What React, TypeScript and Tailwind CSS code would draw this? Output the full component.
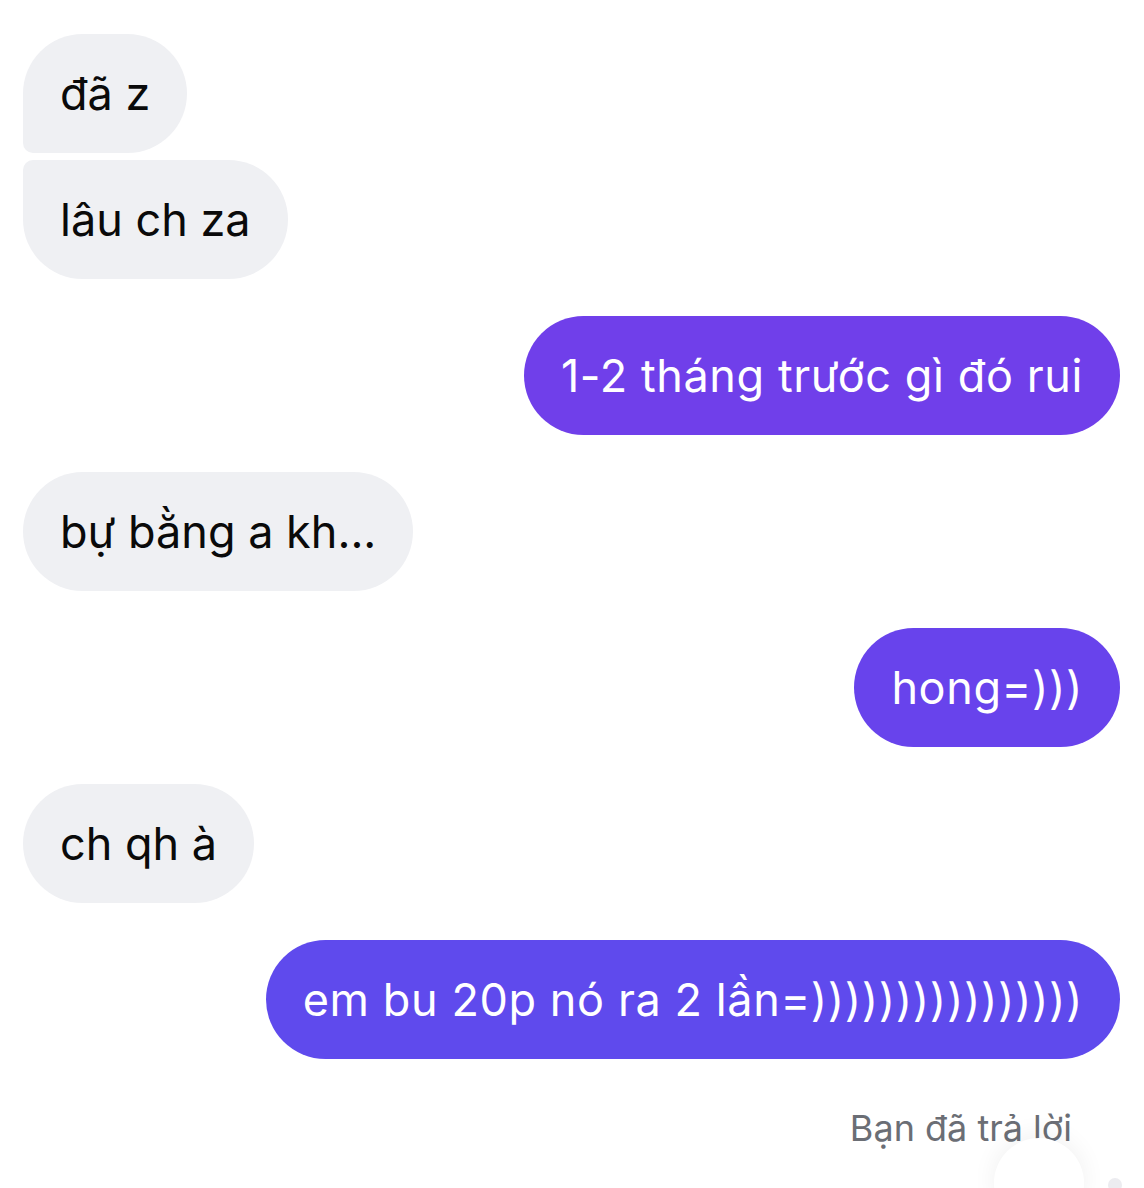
import React from "react";

type Msg = {
  text: string;
  mine?: boolean;
  shape?: string;
  color?: string;
  gapTop: string;
};

const messages: Msg[] = [
  { text: "đã z", shape: "rounded-[60px] rounded-bl-[10px]", gapTop: "mt-0" },
  { text: "lâu ch za", shape: "rounded-[60px] rounded-tl-[10px]", gapTop: "mt-[7px]" },
  { text: "1-2 tháng trước gì đó rui", mine: true, color: "bg-[#703fea]", gapTop: "mt-[37px]" },
  { text: "bự bằng a kh...", gapTop: "mt-[37px]" },
  { text: "hong=)))", mine: true, color: "bg-[#6843ec]", gapTop: "mt-[37px]" },
  { text: "ch qh à", gapTop: "mt-[37px]" },
  { text: "em bu 20p nó ra 2 lần=))))))))))))))))", mine: true, color: "bg-[#5f4aed]", gapTop: "mt-[37px]" },
];

function Bubble({ text, mine, shape, color, gapTop }: Msg) {
  return (
    <div className={`flex ${mine ? "justify-end" : "justify-start"} ${gapTop}`}>
      <div
        className={`flex h-[119px] items-center px-[37px] text-[45px] leading-none whitespace-nowrap ${
          shape ?? "rounded-full"
        } ${mine ? `${color} text-white tracking-[0.6px]` : "bg-[#eff0f3] text-[#0a0a0a]"}`}
      >
        {text}
      </div>
    </div>
  );
}

export default function App() {
  return (
    <div
      className="relative h-[1188px] w-[1144px] overflow-hidden bg-white pt-[34px] pl-[23px] pr-[24px]"
      style={{ fontFamily: "Inter, 'Noto Sans', sans-serif" }}
    >
      {messages.map((m, i) => (
        <Bubble key={i} {...m} />
      ))}
      <div className="mt-[51px] flex justify-end pr-[48px] text-[36px] leading-none text-[#6b6e75]">
        Bạn đã trả lời
      </div>
      {/* peeking reaction bar at the bottom edge */}
      <div className="absolute bottom-[-40px] right-[60px] h-[90px] w-[90px] rounded-full bg-white shadow-[0_-4px_24px_rgba(0,0,0,0.06)]" />
      <div className="absolute bottom-[-4px] right-[22px] h-[14px] w-[14px] rounded-full bg-[#ececf0]" />
    </div>
  );
}
